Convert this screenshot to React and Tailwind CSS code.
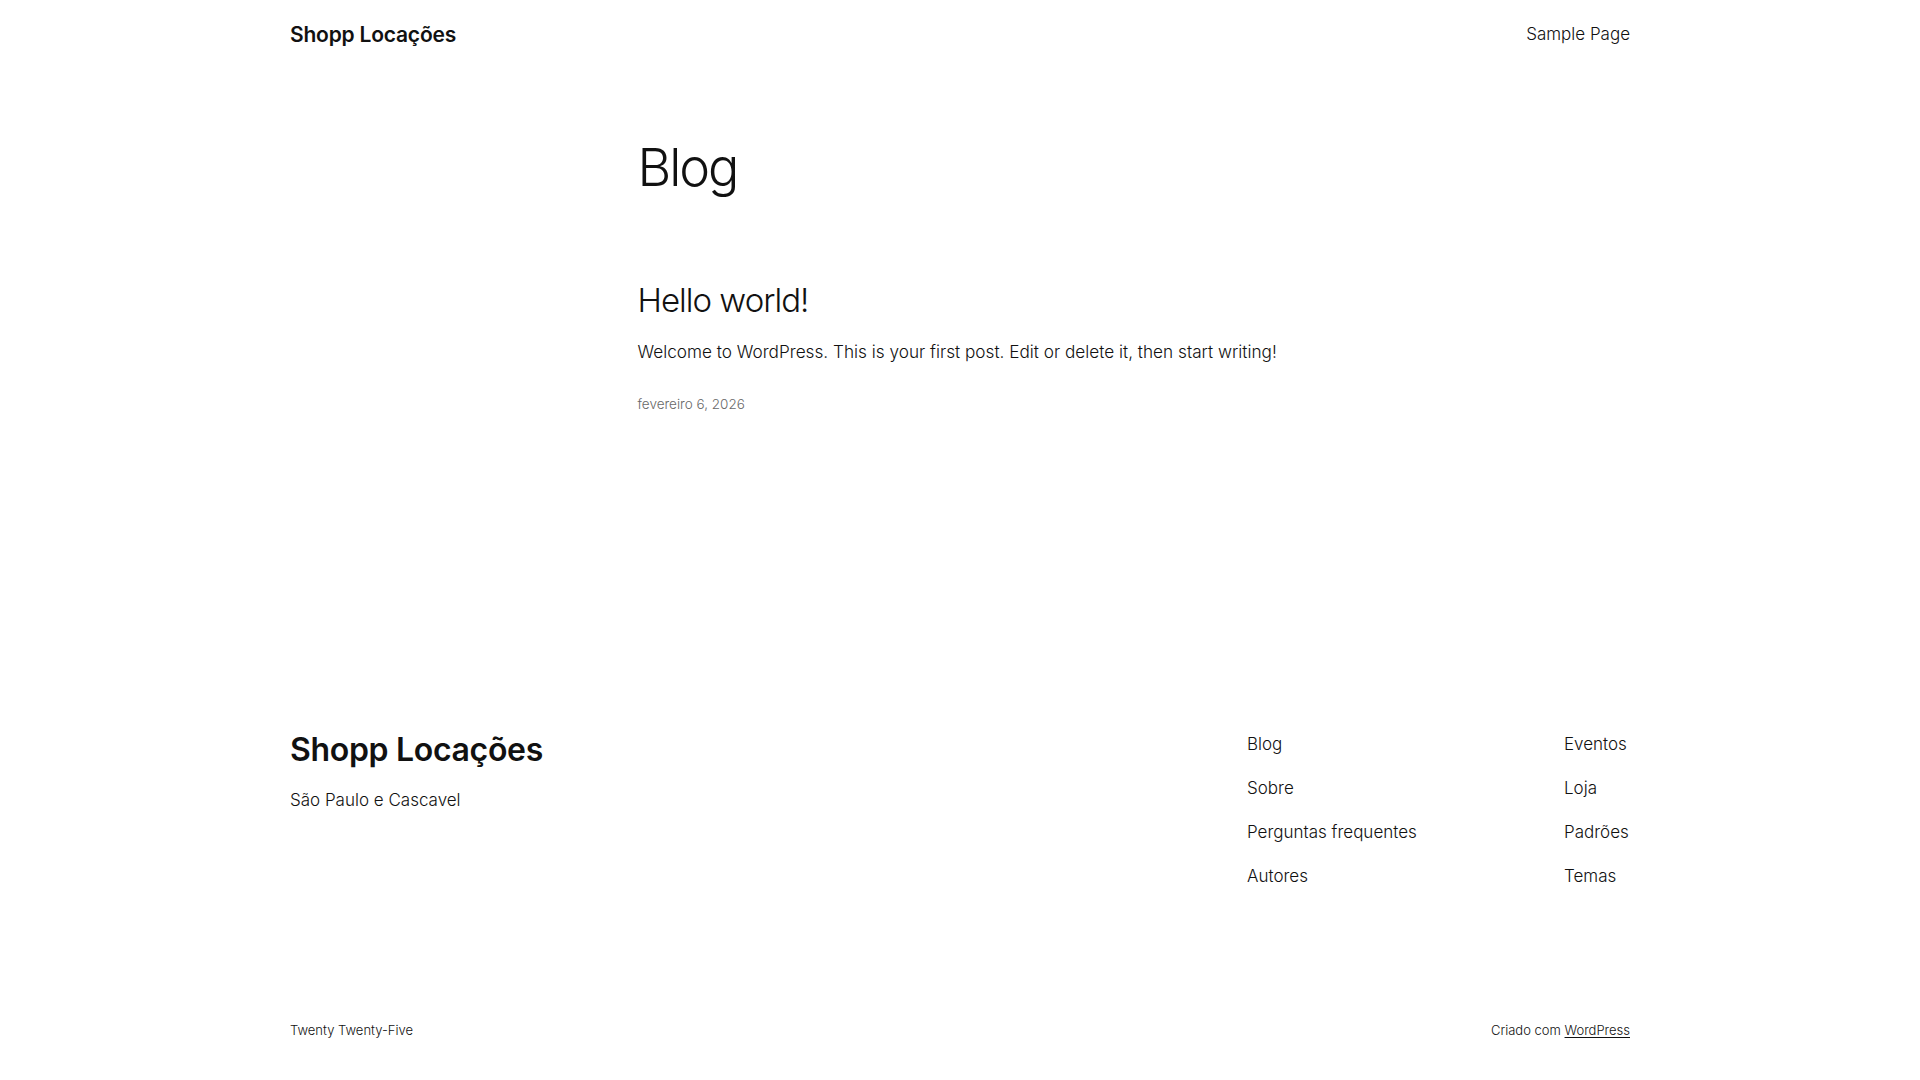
export default function App() {
  const colA = ["Blog", "Sobre", "Perguntas frequentes", "Autores"];
  const colB = ["Eventos", "Loja", "Padrões", "Temas"];

  return (
    <div className="min-h-screen bg-white text-[#111111] font-['Inter',sans-serif]">
      {/* header */}
      <header className="mx-auto flex h-[70px] w-full max-w-[1340px] items-center justify-between">
        <a className="text-[21px] font-semibold tracking-[-0.01em]">Shopp Locações</a>
        <nav className="text-[17px] font-light">
          <a>Sample Page</a>
        </nav>
      </header>

      {/* main */}
      <main className="mx-auto w-full max-w-[645px]">
        <h1 className="mt-[67px] text-[52px] font-light leading-[1.2] tracking-[-0.04em]">Blog</h1>
        <article className="mt-[82px]">
          <h2 className="text-[33px] font-light leading-[1.2] tracking-[-0.03em]">Hello world!</h2>
          <p className="mt-[17px] whitespace-nowrap text-[17.2px] font-light leading-[1.6]">
            Welcome to WordPress. This is your first post. Edit or delete it, then start writing!
          </p>
          <p className="mt-[28px] text-[13.5px] font-light leading-[1.5] text-[#686868]">fevereiro 6, 2026</p>
        </article>
      </main>

      {/* footer */}
      <footer className="mx-auto mt-[317px] w-full max-w-[1340px] pb-[41px]">
        <div className="flex items-start justify-between">
          <div>
            <p className="text-[32px] font-semibold leading-[1.2] tracking-[-0.01em]">Shopp Locações</p>
            <p className="mt-[18px] text-[17px] font-light leading-[1.6]">São Paulo e Cascavel</p>
          </div>
          <nav className="flex w-[383px] text-[17px] font-light leading-[1.6]">
            <ul className="flex w-[317px] flex-col gap-[17px]">
              {colA.map((l) => (
                <li key={l}>{l}</li>
              ))}
            </ul>
            <ul className="flex flex-1 flex-col gap-[17px]">
              {colB.map((l) => (
                <li key={l}>{l}</li>
              ))}
            </ul>
          </nav>
        </div>
        <div className="mt-[130px] flex items-center justify-between text-[13px] font-light leading-[1.5]">
          <p>Twenty Twenty-Five</p>
          <p>
            Criado com <a className="underline underline-offset-2">WordPress</a>
          </p>
        </div>
      </footer>
    </div>
  );
}
